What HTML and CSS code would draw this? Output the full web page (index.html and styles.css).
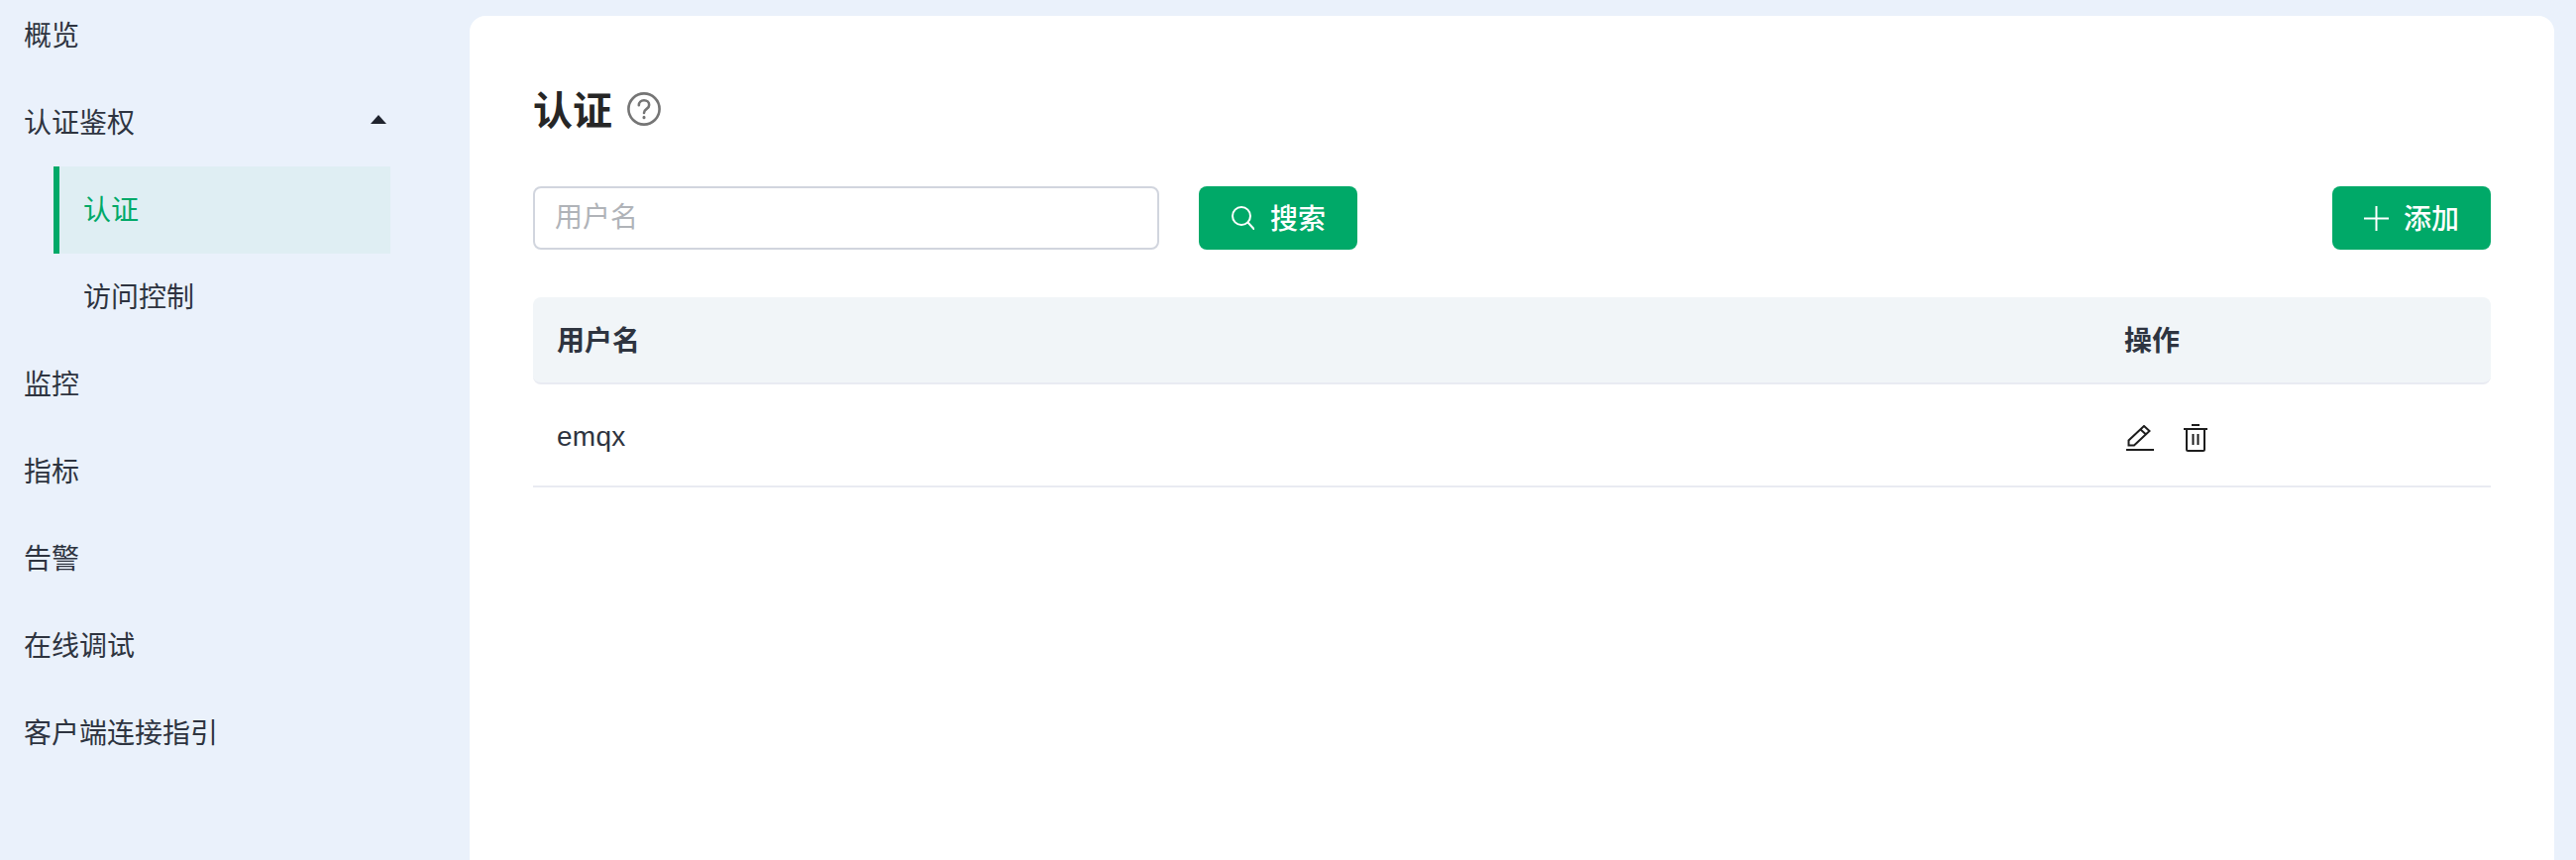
FILE: index.html
```html
<!DOCTYPE html>
<html lang="zh-CN">
<head>
<meta charset="UTF-8">
<meta name="viewport" content="width=device-width, initial-scale=1.0">
<title>认证</title>
<link rel="stylesheet" href="styles.css">
</head>
<body>

<div class="layout">
    <nav class="sidebar">
        <div class="menu-item">概览</div>
        <div class="menu-item menu-open">
            认证鉴权
            <span class="menu-arrow"></span>
        </div>
        <div class="sub-item active">认证</div>
        <div class="sub-item">访问控制</div>
        <div class="menu-item">监控</div>
        <div class="menu-item">指标</div>
        <div class="menu-item">告警</div>
        <div class="menu-item">在线调试</div>
        <div class="menu-item">客户端连接指引</div>
    </nav>

    <main class="card">
        <h1 class="title">
            <span class="title-text">认证</span>
            <svg class="help-icon" width="34" height="34" viewBox="0 0 34 34" fill="none" stroke="#757575" stroke-width="2.6" stroke-linecap="round">
                <circle cx="17" cy="17" r="15.6"/>
                <path d="M11.8 13.2c0-3 2.3-4.9 5.2-4.9s5.200 1.900 5.200 4.600c0 2-1.200 3.100-2.800 4.200-1.600 1.100-2.400 2-2.400 3.900"/>
                <path d="M17 25.200v.6" stroke-width="3"/>
            </svg>
        </h1>

        <div class="toolbar">
            <div class="search">
                <input class="search-input" type="text" placeholder="用户名">
                <button class="btn">
                    <svg width="24" height="24" viewBox="0 0 24 24" fill="none" stroke="#fff" stroke-width="2" stroke-linecap="round">
                        <circle cx="11" cy="10" r="9"/>
                        <path d="M17.500 16.500L23.500 23"/>
                    </svg>
                    <span class="btn-text">搜索</span>
                </button>
            </div>
            <button class="btn btn-add">
                <svg width="25" height="25" viewBox="0 0 25 25" fill="none" stroke="#fff" stroke-width="2">
                    <path d="M12.500 0v25M0 12.500h25"/>
                </svg>
                <span class="btn-text">添加</span>
            </button>
        </div>

        <table class="user-table">
            <thead>
                <tr>
                    <th>用户名</th>
                    <th class="col-actions">操作</th>
                </tr>
            </thead>
            <tbody>
                <tr>
                    <td class="cell-name">emqx</td>
                    <td>
                        <div class="actions">
                            <svg width="28" height="26" viewBox="0 0 28 26" fill="none" stroke="#1d1d1d" stroke-width="2">
                                <path d="M2.500 20.500V15.500L18 1l5.500 5L8 20.500z"/>
                                <path d="M14.500 4.500l5.500 5"/>
                                <path d="M0 25h28"/>
                            </svg>
                            <svg width="24" height="28" viewBox="0 0 24 28" fill="none" stroke="#1d1d1d" stroke-width="2">
                                <path d="M8 1h8M0 5h24"/>
                                <path d="M3 5v20.500q0 1.500 1.500 1.500h15q1.500 0 1.500-1.500V5"/>
                                <path d="M9.500 10v11M14.500 10v11"/>
                            </svg>
                        </div>
                    </td>
                </tr>
            </tbody>
        </table>
    </main>
</div>

</body>
</html>
```

FILE: styles.css
```css
* {
    box-sizing: border-box;
}

html, body {
    height: 100%;
}

body {
    margin: 0;
    overflow: hidden;
    background-color: #eaf1fb;
    color: #2e3440;
    font-family: "Liberation Sans", "Noto Sans CJK SC", sans-serif;
    font-size: 28px;
}

.layout {
    display: flex;
    height: 100%;
}

.sidebar {
    flex: 0 0 474px;
    margin-top: -8px;
}

.menu-item {
    display: flex;
    align-items: center;
    justify-content: space-between;
    height: 88px;
    padding: 0 24px 4px;
    width: 419px;
}

.menu-arrow {
    width: 0;
    height: 0;
    margin-right: 5px;
    margin-bottom: 4px;
    border-left: 8px solid transparent;
    border-right: 8px solid transparent;
    border-bottom: 9px solid #20242e;
}

.sub-item {
    display: flex;
    align-items: center;
    height: 88px;
    width: 340px;
    margin-left: 54px;
    padding: 0 0 4px 30px;
}

.sub-item.active {
    background-color: #dfeef3;
    border-left: 6px solid #00a968;
    padding-left: 24px;
    color: #00a968;
}

.card {
    flex: 0 0 2104px;
    margin-top: 16px;
    padding: 64px 64px 0;
    background-color: #fff;
    border-radius: 16px 16px 0 0;
}

.title {
    display: flex;
    align-items: center;
    gap: 15px;
    height: 60px;
    margin: 0 0 48px;
    color: #262626;
    font-size: 40px;
    font-weight: 700;
}

.title-text {
    margin-bottom: 3px;
}

.toolbar {
    display: flex;
    justify-content: space-between;
    margin-bottom: 48px;
}

.search {
    display: flex;
    gap: 40px;
}

.search-input {
    width: 632px;
    height: 64px;
    padding: 0 20px;
    border: 2px solid #d1d5de;
    border-radius: 8px;
    color: #2e3440;
    font-family: inherit;
    font-size: 28px;
}

.search-input::placeholder {
    color: #b0b3b8;
}

.btn {
    display: flex;
    align-items: center;
    justify-content: center;
    gap: 16px;
    width: 160px;
    height: 64px;
    border: none;
    border-radius: 8px;
    background-color: #00a968;
    color: #fff;
    font-family: inherit;
    font-size: 28px;
    font-weight: 500;
    cursor: pointer;
}

.btn-add {
    gap: 15px;
}

.btn-text {
    margin-bottom: 3px;
}

.user-table {
    width: 100%;
    border-collapse: separate;
    border-spacing: 0;
    table-layout: fixed;
}

.user-table th {
    height: 88px;
    padding: 0 24px 3px;
    background-color: #f1f5f8;
    border-bottom: 2px solid #e9ebf2;
    text-align: left;
    font-weight: 700;
}

.user-table th:first-child {
    border-radius: 8px 0 0 8px;
}

.user-table th:last-child {
    border-radius: 0 8px 8px 0;
}

.col-actions {
    width: 394px;
}

.user-table td {
    height: 104px;
    padding: 6px 24px 0;
    border-bottom: 2px solid #e9ebf2;
}

.user-table .cell-name {
    padding-top: 3px;
    letter-spacing: 0.3px;
}

.actions {
    display: flex;
    align-items: center;
    gap: 30px;
    padding-left: 2px;
}
```
